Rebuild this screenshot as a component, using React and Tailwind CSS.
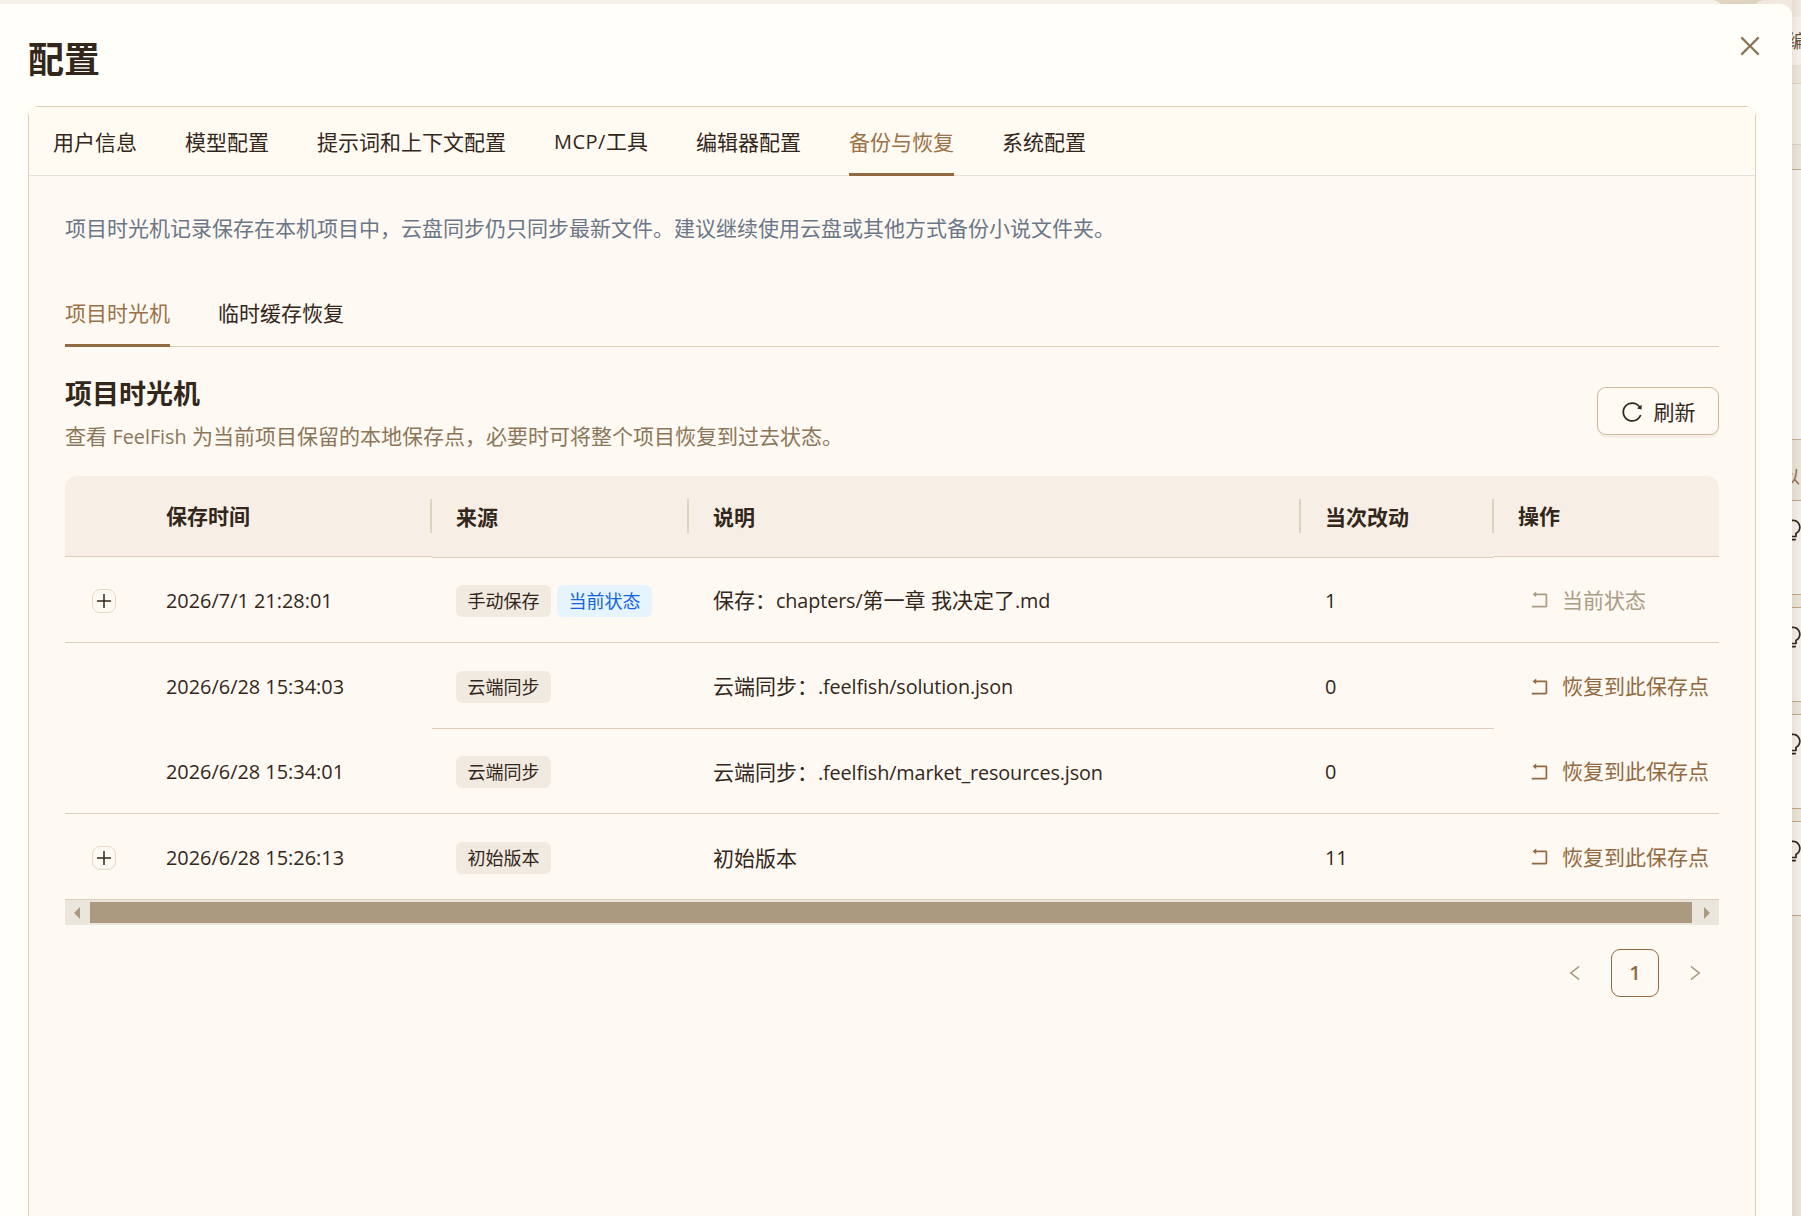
import { useState } from 'react';
import clsx from 'clsx';
import {
  AiOutlineBulb,
  AiOutlineClose,
  AiOutlineLeft,
  AiOutlineReload,
  AiOutlineRight,
  AiOutlineRollback,
} from 'react-icons/ai';

const TABS = ['用户信息', '模型配置', '提示词和上下文配置', 'MCP/工具', '编辑器配置', '备份与恢复', '系统配置'];
const SUB_TABS = ['项目时光机', '临时缓存恢复'];

const SAVE_POINTS = [
  { time: '2026/7/1 21:28:01', source: '手动保存', current: true, desc: '保存：chapters/第一章 我决定了.md', changes: 1, height: 'h-[86px]' },
  { time: '2026/6/28 15:34:03', source: '云端同步', desc: '云端同步：.feelfish/solution.json', changes: 0, height: 'h-[86px]', openEdges: true },
  { time: '2026/6/28 15:34:01', source: '云端同步', desc: '云端同步：.feelfish/market_resources.json', changes: 0, height: 'h-[85px]' },
  { time: '2026/6/28 15:26:13', source: '初始版本', desc: '初始版本', changes: 11, height: 'h-[86px]' },
];

const COLS = 'grid grid-cols-[77px_290px_257px_612px_193px_225px]';

// Latin runs are set slightly smaller so they sit evenly beside the Chinese glyphs
function Mixed({ text, className = 'text-[19.8px]' }) {
  return text.split(/([\x21-\x7e]+)/).map((part, i) =>
    /^[\x21-\x7e]/.test(part) ? <span key={i} className={className}>{part}</span> : part
  );
}

function Tag({ children, blue }) {
  return (
    <span
      className={clsx(
        'flex h-8 items-center rounded-md px-[11.5px] text-[18px] leading-none',
        blue ? 'bg-[#e6f4ff] text-[#1463e6]' : 'bg-[#f1eae1] text-[#33271b]'
      )}
    >
      {children}
    </span>
  );
}

function HeaderCell({ children, middle, divider }) {
  return (
    <div
      className={clsx(
        'flex items-center justify-between border-b border-[#dbceb8] bg-[#f7efe6] pl-6 font-bold',
        middle ? 'h-[82px]' : 'h-[81px]'
      )}
    >
      <span>{children}</span>
      {divider && <span className="mb-px h-[34px] w-0.5 bg-[#dfd3bd]" />}
    </div>
  );
}

function SavePointRow({ row }) {
  const line = 'border-b border-[#dbceb8]';
  const edge = row.openEdges ? '' : line;
  return (
    <div className={clsx(COLS, row.height)}>
      <div className={clsx('flex items-center pt-[3px] pl-[27px]', edge)}>
        {(row.current || row.changes > 0) && (
          <button className="flex h-6 w-6 items-center justify-center rounded-lg border-[1.5px] border-[#e6dac6]">
            <svg width="14" height="14" viewBox="0 0 14 14" stroke="#33271b" strokeWidth="1.5">
              <path d="M0 7H14M7 0V14" />
            </svg>
          </button>
        )}
      </div>
      <div className={clsx('flex items-center pt-0.5 pl-6 text-[19.9px]', edge)}>{row.time}</div>
      <div className={clsx('flex items-center gap-1.5 pt-0.5 pl-6', line)}>
        <Tag>{row.source}</Tag>
        {row.current && <Tag blue>当前状态</Tag>}
      </div>
      <div className={clsx('flex items-center pt-0.5 pl-6', line)}>
        <span className="whitespace-pre">
          <Mixed text={row.desc} className="text-[19.8px] tracking-[-0.12px]" />
        </span>
      </div>
      <div className={clsx('flex items-center pt-0.5 pl-6 text-[19.9px]', line)}>{row.changes}</div>
      <div className={clsx('flex items-center pl-[34px]', edge)}>
        <button
          disabled={row.current}
          className={clsx('flex items-center gap-3 whitespace-nowrap', row.current ? 'text-[#ab9c84]' : 'text-[#926a42]')}
        >
          <AiOutlineRollback className="-mr-px size-[23px]" />
          {row.current ? '当前状态' : '恢复到此保存点'}
        </button>
      </div>
    </div>
  );
}

// The sliver of the editor that stays visible to the right of the dialog
function EditorEdge() {
  return (
    <div className="relative flex h-full w-[9px] shrink-0 flex-col overflow-hidden text-[#33271b]">
      <div className="h-[17px] shrink-0 bg-[#f1e9df]" />
      <div className="h-12 shrink-0 bg-[#f8f0e8] pt-2">
        <span className="-ml-[4px] block w-6 text-[18px] leading-8 text-[#6b543b]">编</span>
      </div>
      <div className="h-[19px] shrink-0 border-b border-[#ddd3c4] bg-[#eee5d9]" />
      <div className="h-[61px] shrink-0 border-b border-[#ddd3c4] bg-[#f1ece1]" />
      <div className="h-[25px] shrink-0 border-b border-[#bfae91] bg-[#ebe4d8]" />
      <div className="h-[270px] shrink-0 border-b border-[#bfae91] bg-[#f4efe9]" />
      <div className="h-[60px] shrink-0 bg-[#ebe3d6] pt-[21px]">
        <span className="-ml-[10px] block w-6 text-[18px] leading-8 text-[#8a6f51]">以</span>
      </div>
      {[0, 1, 2, 3].map((i) => (
        <div key={i} className="mb-3 h-[95px] shrink-0 border-y border-[#bfa987] bg-[#f3eee8] pt-[17px]">
          <AiOutlineBulb className="-ml-[11px] size-6" />
        </div>
      ))}
      <div className="-mt-3 grow bg-[#ebe3d6]" />
      <div className="absolute inset-0 bg-linear-to-r from-black/5 to-transparent" />
    </div>
  );
}

export default function App() {
  const [tab, setTab] = useState('备份与恢复');
  const [subTab, setSubTab] = useState('项目时光机');

  return (
    <div className="relative flex h-[1216px] w-[1801px] overflow-hidden bg-[#ebe3d6] font-['Open_Sans','Noto_Sans_CJK_SC',sans-serif] text-[21px] leading-8 text-[#33271b]">
      <div className="absolute top-0 left-0 h-4 w-full bg-[#e1d4bf]" />
      <div className="absolute top-0 left-0 h-4 w-[1724px] rounded-tr-xl bg-[#f5f0e8]" />
      <div className="absolute top-0 left-[1753px] h-16 w-[48px] rounded-tl-xl bg-[#f1e9df]" />

      <div className="relative z-10 mt-1 -ml-2 flex w-[1800px] shrink-0 flex-col rounded-t-xl bg-[#fffef9] pr-9 pl-9">
        <div className="flex h-[102px] shrink-0 items-start justify-between">
          <h1 className="mt-8 text-[36px] leading-12 font-bold">配置</h1>
          <button className="mt-[28px] -mr-2 text-[#8b7456]">
            <AiOutlineClose className="size-7" />
          </button>
        </div>

        <div className="grow rounded-t-[10px] border border-b-0 border-[#dccdb5] bg-[#fef9f2]">
          <div className="flex h-[69px] gap-12 rounded-t-[3px] border-b border-[#e9e1d4] bg-[#fffaf2] pl-6">
            {TABS.map((name) => (
              <button
                key={name}
                onClick={() => setTab(name)}
                className={clsx(
                  '-mb-px border-b-3 pt-[3px] whitespace-nowrap',
                  tab === name ? 'border-[#926a42] text-[#9a7148]' : 'border-transparent'
                )}
              >
                <Mixed text={name} className="text-[20px] tracking-[0.5px]" />
              </button>
            ))}
          </div>

          <div className="px-9">
            <p className="pt-9 text-[#6b7689]">
              项目时光机记录保存在本机项目中，云盘同步仍只同步最新文件。建议继续使用云盘或其他方式备份小说文件夹。
            </p>

            <div className="mt-9 flex h-[67px] gap-12 border-b border-[#dccdb5]">
              {SUB_TABS.map((name) => (
                <button
                  key={name}
                  onClick={() => setSubTab(name)}
                  className={clsx(
                    '-mb-px border-b-3 pt-0.5',
                    subTab === name ? 'border-[#926a42] text-[#9a7148]' : 'border-transparent'
                  )}
                >
                  {name}
                </button>
              ))}
            </div>

            <div className="flex h-[129px] items-start justify-between">
              <div>
                <h2 className="mt-[29px] text-[27px] leading-9 font-bold">{subTab}</h2>
                <p className="mt-2 text-[#8b7659]">
                  <Mixed text="查看 FeelFish 为当前项目保留的本地保存点，必要时可将整个项目恢复到过去状态。" />
                </p>
              </div>
              <button className="mt-10 flex h-12 w-[122px] items-center justify-center gap-2.5 rounded-[9px] border border-[#cdb899] bg-[#fffaf3] pt-px pr-px shadow-[0_3px_0_rgba(100,60,20,0.06)]">
                <AiOutlineReload className="size-6" />
                刷新
              </button>
            </div>

            <div className={clsx(COLS, 'h-[81px] overflow-visible')}>
              <div className="h-[81px] rounded-tl-xl border-b border-[#dbceb8] bg-[#f7efe6]" />
              <HeaderCell divider>保存时间</HeaderCell>
              <HeaderCell middle divider>来源</HeaderCell>
              <HeaderCell middle divider>说明</HeaderCell>
              <HeaderCell middle divider>当次改动</HeaderCell>
              <div className="flex h-[81px] items-center rounded-tr-xl border-b border-[#dbceb8] bg-[#f7efe6] pl-6 font-bold">操作</div>
            </div>
            {SAVE_POINTS.map((row) => (
              <SavePointRow key={row.time} row={row} />
            ))}

            {/* Horizontal scrollbar */}
            <div className="flex h-[25px] items-center bg-[#eae6dc] text-[#ab9a80]">
              <svg className="w-[25px]" height="12" viewBox="0 0 25 12" fill="currentColor">
                <path d="M9 6L15 0V12Z" />
              </svg>
              <div className="h-[21px] grow bg-[#ab9a80]" />
              <svg className="w-[27px]" height="12" viewBox="0 0 27 12" fill="currentColor">
                <path d="M18 6L12 0V12Z" />
              </svg>
            </div>

            <div className="mt-6 flex items-center justify-end gap-3 text-[#a8987f]">
              <button className="flex size-12 items-center justify-center">
                <AiOutlineLeft className="size-5" />
              </button>
              <button className="size-12 rounded-[9px] border-[1.5px] border-[#926a42] text-[20px] font-semibold text-[#926a42]">1</button>
              <button className="flex size-12 items-center justify-center">
                <AiOutlineRight className="size-5" />
              </button>
            </div>
          </div>
        </div>
      </div>

      <EditorEdge />
    </div>
  );
}
